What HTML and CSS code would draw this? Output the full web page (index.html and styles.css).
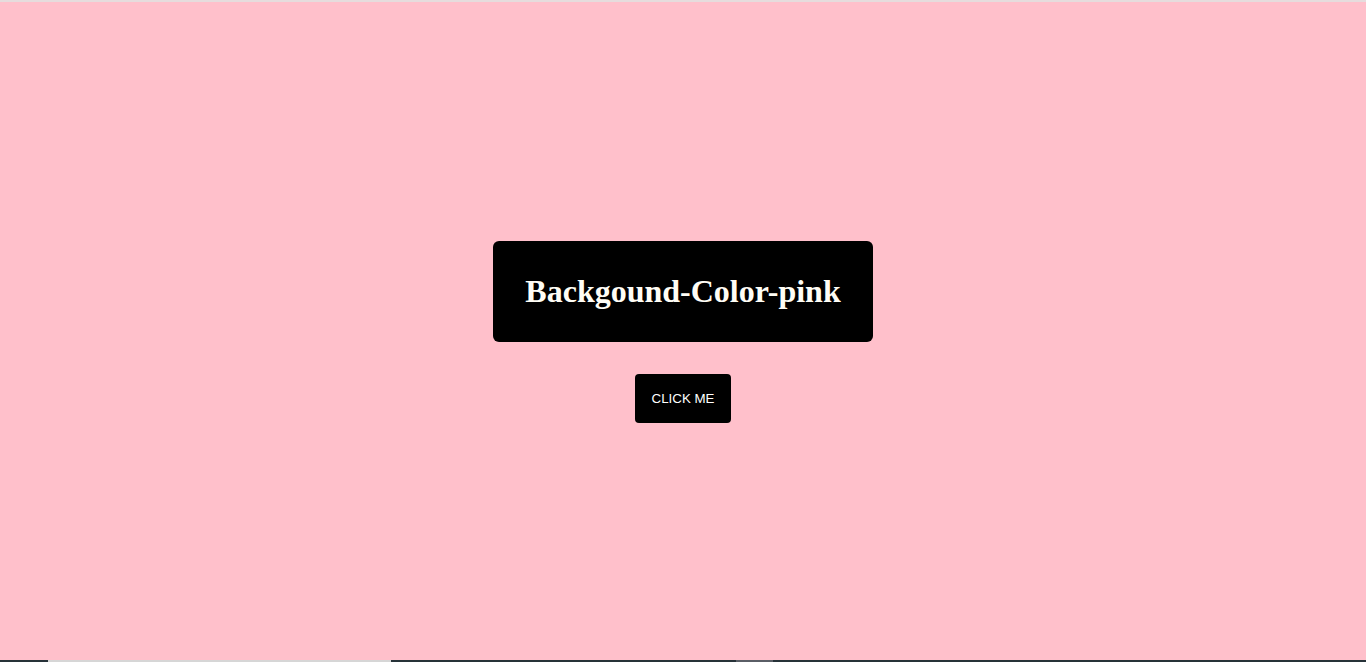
FILE: index.html
```html
<!DOCTYPE html>
<html lang="en">
<head>
<meta charset="utf-8">
<title>Backgound-Color-pink</title>
<link rel="stylesheet" href="styles.css">
</head>
<body>
<div class="page">
  <div class="top-strip"></div>
  <main class="stage">
    <div class="title-box">
      <h1 class="title">Backgound-Color-pink</h1>
    </div>
    <button class="btn" type="button">CLICK ME</button>
  </main>
  <div class="bottom-strip">
    <span class="seg seg-dark seg-a"></span>
    <span class="seg seg-light seg-b"></span>
    <span class="seg seg-dark seg-c"></span>
    <span class="seg seg-mid seg-d"></span>
    <span class="seg seg-dark seg-e"></span>
  </div>
</div>
</body>
</html>
```

FILE: styles.css
```css
html, body {
  margin: 0;
  padding: 0;
  height: 100%;
}

body {
  background: #ffc0cb;
  font-family: "Liberation Serif", "Times New Roman", serif;
}

.page {
  height: 100vh;
  display: flex;
  flex-direction: column;
}

.top-strip {
  height: 2px;
  background: #e6dcdd;
  flex: 0 0 auto;
}

.stage {
  flex: 1 1 auto;
  display: flex;
  flex-direction: column;
  align-items: center;
  justify-content: center;
  gap: 32px;
  padding-top: 2px;
}

.title-box {
  background: #000;
  border-radius: 6px;
  padding: 32px;
}

.title {
  margin: 0;
  color: #fffdf5;
  font-family: "Liberation Serif", "Times New Roman", serif;
  font-weight: bold;
  font-size: 32px;
  line-height: 37px;
}

.btn {
  background: #000;
  color: #fff;
  border: none;
  border-radius: 4px;
  padding: 17px;
  font-family: "Liberation Sans", Arial, sans-serif;
  font-size: 13.33px;
  line-height: 15px;
  cursor: pointer;
}

.bottom-strip {
  height: 2px;
  flex: 0 0 auto;
  display: flex;
}

.seg {
  display: block;
  height: 100%;
}

.seg-dark { background: #263238; }
.seg-light { background: #d6d6d6; }
.seg-mid { background: #5a5e66; }

.seg-a { width: 48px; }
.seg-b { width: 343px; }
.seg-c { width: 345px; }
.seg-d { width: 37px; }
.seg-e { flex: 1 1 auto; }
```
